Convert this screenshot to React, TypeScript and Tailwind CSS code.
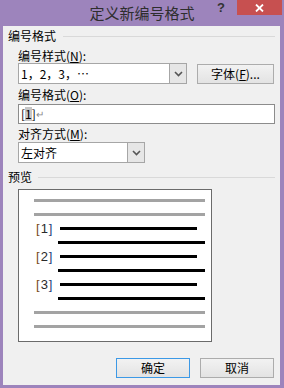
import React from "react";

const FONT = { fontFamily: '"Noto Sans CJK SC", "Liberation Sans", sans-serif' };

function Chevron() {
  return (
    <svg width="9" height="6" viewBox="0 0 9 6" className="block">
      <polyline points="1,1 4.5,4.5 8,1" fill="none" stroke="#555" strokeWidth="1.6" />
    </svg>
  );
}

function Combo({ text, width }: { text: string; width: string }) {
  return (
    <div className={`flex h-[21px] border border-[#a6a6a6] bg-white ${width}`}>
      <div className="flex flex-1 items-center pl-[2px] text-[12px] leading-[14px] text-black">{text}</div>
      <div className="flex w-[17px] items-center justify-center border-l border-[#a6a6a6] bg-[#e6e6e6]">
        <Chevron />
      </div>
    </div>
  );
}

function Label({ main, key1 }: { main: string; key1: string }) {
  return (
    <div className="ml-[15px] text-[12px] leading-[14px] text-black">
      {main}(<span className="underline">{key1}</span>):
    </div>
  );
}

function GroupHeader({ title }: { title: string }) {
  return (
    <div className="flex items-center pl-[5px] pr-[5px]">
      <span className="text-[12px] leading-[14px] text-black">{title}</span>
      <div className="ml-[7px] h-px flex-1 bg-[#d9d9d9]" />
    </div>
  );
}

function Line({ left, width, color }: { left: string; width: string; color: string }) {
  return <div className={`h-[3px] ${left} ${width} ${color}`} />;
}

function NumRow({ n }: { n: number }) {
  return (
    <div className="ml-[17px] flex h-[3px] items-center">
      <span
        className="w-[24px] text-[13px] leading-[14px] tracking-[1px] text-[#2a2a2a]"
        style={{ fontFamily: '"Liberation Sans", sans-serif' }}
      >
        <span className="text-[#7a4a1a]">[</span>
        {n}
        <span className="text-[#1f3f7a]">]</span>
      </span>
      <div className="h-[3px] w-[137px] bg-black" />
    </div>
  );
}

export default function App() {
  return (
    <div className="flex h-[388px] w-[284px] flex-col bg-[#9d84bc]" style={FONT}>
      {/* TITLE BAR */}
      <div className="relative h-[26px]">
        <div className="pt-[4px] text-center text-[15px] leading-[18px] text-[#2e2e2e]">定义新编号格式</div>
        <div className="absolute right-[2px] top-0 flex items-start">
          <span
            className="mr-[12px] mt-[1px] text-[13px] font-bold leading-[13px] text-[#333]"
            style={{ fontFamily: '"Liberation Sans", sans-serif' }}
          >
            ?
          </span>
          <div className="flex h-[15px] w-[45px] items-center justify-center bg-[#c75050]">
            <svg width="9" height="8" viewBox="0 0 9 8">
              <path d="M1 0.5 L8 7.5 M8 0.5 L1 7.5" stroke="white" strokeWidth="1.8" />
            </svg>
          </div>
        </div>
      </div>

      {/* CLIENT */}
      <div className="mb-[3px] ml-[3px] mr-[4px] flex flex-1 flex-col bg-[#f0f0f0] pt-[3px]">
        <GroupHeader title="编号格式" />

        <div className="mt-[6px]">
          <Label main="编号样式" key1="N" />
        </div>
        <div className="ml-[15px] flex items-center">
          <Combo text="1，2，3，…" width="w-[169px]" />
          <button className="ml-[10px] h-[20px] w-[77px] border border-[#acacac] bg-gradient-to-b from-[#f2f2f2] to-[#e3e3e3] text-[12px] leading-[14px] text-black">
            字体(<span className="underline">F</span>)...
          </button>
        </div>

        <div className="mt-[4px]">
          <Label main="编号格式" key1="O" />
        </div>
        <div className="ml-[15px] mr-[5px] mt-[2px] flex h-[20px] items-center border border-[#8c8c8c] bg-white pl-[2px] text-[12px] leading-[14px]">
          <span className="text-black">[</span>
          <span className="bg-[#c6c6c6] text-black">1</span>
          <span className="text-black">]</span>
          <span className="text-[10px] text-[#8a8a8a]">↵</span>
        </div>

        <div className="mt-[3px]">
          <Label main="对齐方式" key1="M" />
        </div>
        <div className="ml-[15px] mt-[1px]">
          <Combo text="左对齐" width="w-[127px]" />
        </div>

        <div className="mt-[7px] flex items-center pl-[5px] pr-[5px]">
          <span className="text-[12px] leading-[14px] text-black">预览</span>
          <div className="ml-[6px] h-px flex-1 bg-[#d9d9d9]" />
        </div>

        {/* PREVIEW */}
        <div className="ml-[15px] mt-[5px] flex h-[153px] w-[194px] flex-col gap-[11px] border border-[#6b6b6b] bg-white pt-[9px]">
          <Line left="ml-[15px]" width="w-[171px]" color="bg-[#a3a3a3]" />
          <Line left="ml-[15px]" width="w-[171px]" color="bg-[#a3a3a3]" />
          <NumRow n={1} />
          <Line left="ml-[39px]" width="w-[147px]" color="bg-black" />
          <NumRow n={2} />
          <Line left="ml-[39px]" width="w-[147px]" color="bg-black" />
          <NumRow n={3} />
          <Line left="ml-[39px]" width="w-[147px]" color="bg-black" />
          <Line left="ml-[15px]" width="w-[171px]" color="bg-[#a3a3a3]" />
          <Line left="ml-[15px]" width="w-[171px]" color="bg-[#a3a3a3]" />
        </div>

        {/* BUTTONS */}
        <div className="mt-[16px] flex justify-end gap-[10px] pr-[6px]">
          <button className="h-[20px] w-[74px] border border-[#3c99e6] bg-gradient-to-b from-[#f2f2f2] to-[#e3e3e3] text-[12px] leading-[14px] text-black">
            确定
          </button>
          <button className="h-[20px] w-[74px] border border-[#acacac] bg-gradient-to-b from-[#f2f2f2] to-[#e3e3e3] text-[12px] leading-[14px] text-black">
            取消
          </button>
        </div>
      </div>
    </div>
  );
}
